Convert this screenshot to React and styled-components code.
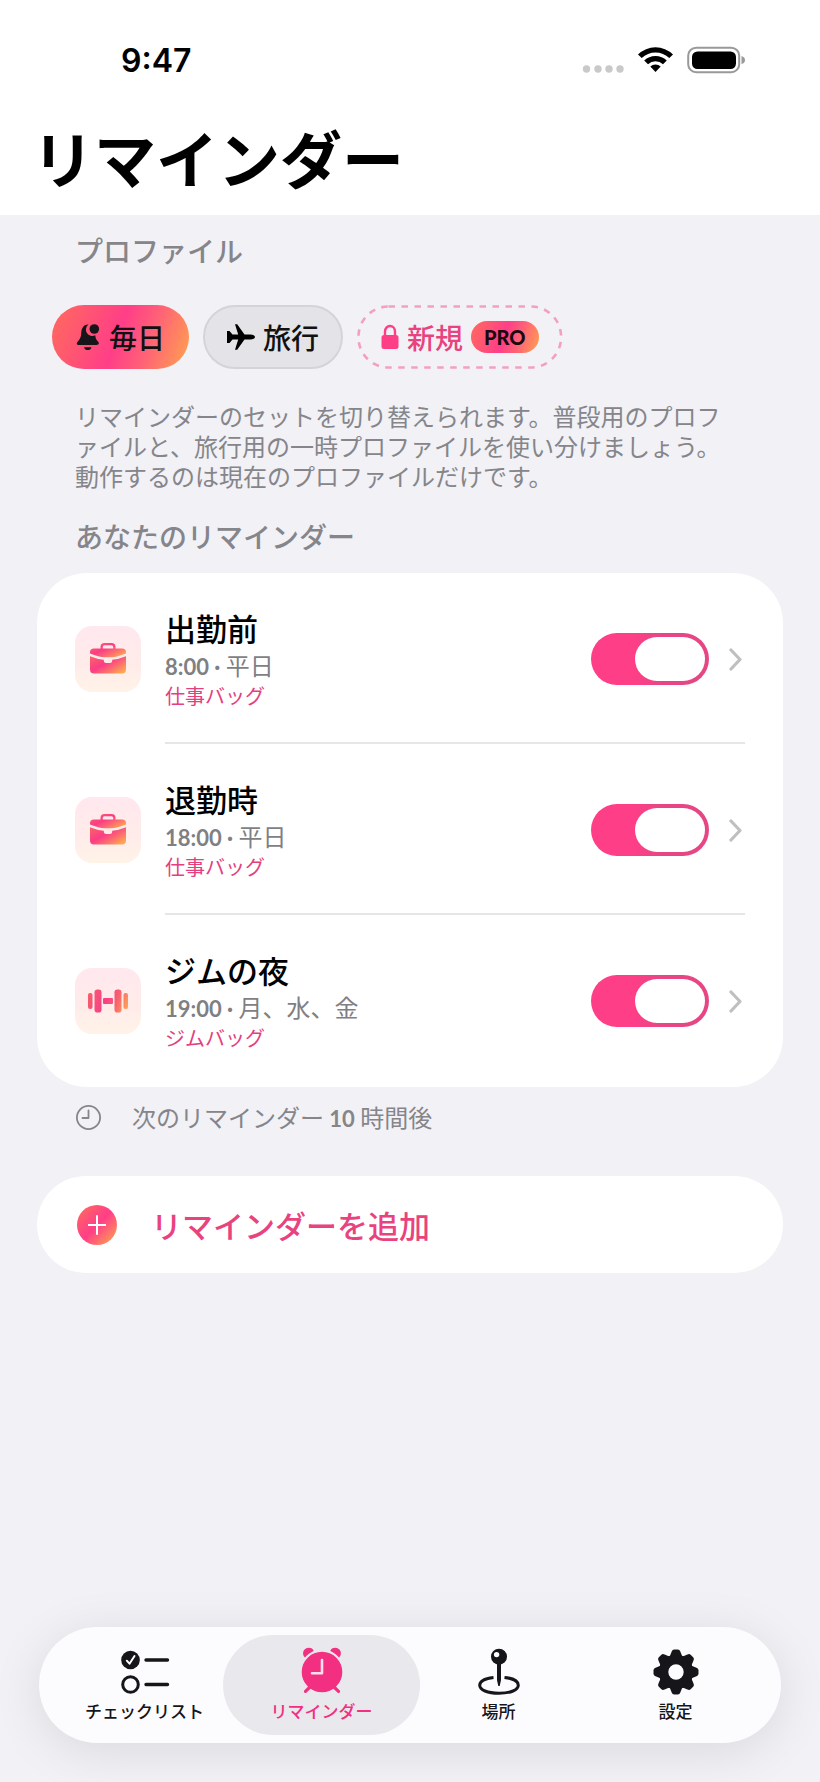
import React from 'react';
import styled, { createGlobalStyle } from 'styled-components';

const GlobalStyle = createGlobalStyle`
    * {
        box-sizing: border-box;
    }
    body {
        margin: 0;
        background: #f1f1f6;
        color: #000;
        font-family: "Noto Sans CJK JP", sans-serif;
    }
    h1, h2, h3, p, ul {
        margin: 0;
        padding: 0;
    }
    button {
        font-family: inherit;
        cursor: pointer;
    }
`;

const brandGradient = 'linear-gradient(110deg, #ff6464 8%, #ff3e88 48%, #ff5f78 68%, #ffa44e 100%)';

const StyledScreen = styled.div`
    display: flex;
    flex-direction: column;
    min-height: 100vh;
`;

const StyledHeader = styled.header`
    background: #fff;
    padding: 36px 32px 14px;
`;

const StyledStatusBar = styled.div`
    display: flex;
    align-items: center;
    justify-content: space-between;
    padding: 0 43px 0 89px;
    height: 50px;
`;

const StyledTime = styled.span`
    font-family: "Inter", sans-serif;
    font-size: 32px;
    font-weight: 600;
    line-height: 50px;
`;

const StyledTitle = styled.h1`
    margin-top: 27px;
    font-size: 62px;
    font-weight: 700;
    line-height: 88px;
`;

const StyledMain = styled.main`
    padding: 17px 37px 60px;
`;

const StyledSectionLabel = styled.h2`
    padding: 0 38px;
    color: #85858a;
    font-size: 28px;
    font-weight: 500;
    line-height: 36px;
`;

const StyledProfiles = styled.div`
    display: flex;
    flex-wrap: wrap;
    gap: 14px;
    padding: 0 15px;
    margin: 37px 0 32px;
`;

const StyledProfile = styled.button`
    display: flex;
    align-items: center;
    gap: 8px;
    height: 64px;
    padding: 0 ${props => props.$active ? 24 : 22}px;
    border: ${props => props.$active ? 'none' : '2px solid #d4d4d8'};
    border-radius: 32px;
    background: ${props => props.$active ? brandGradient : '#e4e4e8'};
    color: #111;
    font-size: 28px;
    font-weight: 500;
    line-height: 40px;
`;

const StyledNewProfile = styled(StyledProfile)`
    position: relative;
    padding: 0 24px;
    border: none;
    background: none;
    color: #e8437f;
`;

const StyledDashes = styled.svg`
    position: absolute;
    inset: 0;
    width: 100%;
    height: 100%;
`;

const StyledPro = styled.span`
    padding: 0 13px;
    border-radius: 16px;
    background: ${brandGradient};
    color: #1a0a10;
    font-family: "Lato", sans-serif;
    font-size: 20px;
    font-weight: 900;
    line-height: 32px;
`;

const StyledHint = styled.p`
    padding: 0 46px 0 38px;
    margin-bottom: 27px;
    color: #85858a;
    font-size: 24px;
    line-height: 30px;
    line-break: loose;
`;

const StyledCard = styled.ul`
    margin-top: 19px;
    padding: 0 38px;
    border-radius: 50px;
    background: #fff;
    list-style: none;
`;

const StyledReminder = styled.li`
    display: flex;
    align-items: center;
    gap: 24px;
`;

const StyledTile = styled.span`
    display: flex;
    align-items: center;
    justify-content: center;
    width: 66px;
    height: 66px;
    border-radius: 17px;
    background: linear-gradient(180deg, #ffe8ee, #ffebea 55%, #fff3e8);
`;

const StyledReminderBody = styled.div`
    display: flex;
    flex: 1;
    align-items: center;
    padding: 35px 3px ${props => props.$last ? 35 : 32}px 0;
    border-bottom: ${props => props.$last ? 'none' : '2px solid #e6e6e8'};
`;

const StyledReminderText = styled.label`
    flex: 1;
`;

const StyledReminderName = styled.h3`
    font-size: 31px;
    font-weight: 500;
    line-height: 40px;
`;

const StyledReminderTime = styled.p`
    color: #7f7f84;
    font-size: 24px;
    line-height: 34px;
`;

const StyledNumber = styled.b`
    font-family: "Lato", sans-serif;
    font-size: 22px;
    font-weight: 700;
    line-height: 1;
    white-space: pre;
`;

const StyledBag = styled.p`
    color: #e2407e;
    font-size: 20px;
    line-height: 28px;
`;

const StyledSwitch = styled.input`
    appearance: none;
    display: flex;
    justify-content: flex-end;
    width: 118px;
    height: 52px;
    margin: 0 20px 0 0;
    padding: 4px;
    border-radius: 26px;
    background: linear-gradient(90deg, #ff3e88 35%, #e64784 60%);
    &::before {
        content: "";
        width: 70px;
        height: 44px;
        border-radius: 22px;
        background: #fff;
    }
    &:not(:checked) {
        justify-content: flex-start;
        background: #d8d8dc;
    }
`;

const StyledDetails = styled.a`
    display: flex;
`;

const StyledNext = styled.p`
    display: flex;
    align-items: center;
    gap: 31px;
    margin: 15px 0 44px;
    padding: 0 38px;
    color: #85858a;
    font-size: 24px;
    line-height: 30px;
`;

const StyledAdd = styled.button`
    display: flex;
    align-items: center;
    gap: 34px;
    width: 100%;
    height: 97px;
    padding: 0 40px;
    border: none;
    border-radius: 49px;
    background: #fff;
    color: #e8437f;
    font-size: 31px;
    font-weight: 500;
    line-height: 42px;
`;

const StyledPlus = styled.span`
    display: flex;
    align-items: center;
    justify-content: center;
    width: 40px;
    height: 40px;
    border-radius: 50%;
    background: linear-gradient(135deg, #ff6464 10%, #ff3e88 50%, #ffa050 95%);
`;

const StyledTabBar = styled.nav`
    display: grid;
    grid-template-columns: repeat(4, 1fr);
    height: 116px;
    margin: auto 39px 39px;
    padding: 8px 17px;
    border-radius: 58px;
    background: #fcfcff;
    box-shadow: 0 8px 50px rgba(0, 0, 0, 0.1);
`;

const StyledTab = styled.a`
    display: flex;
    flex-direction: column;
    align-items: center;
    gap: 4px;
    margin: 0 -10px;
    padding-top: 12px;
    border-radius: 50px;
    background: ${props => props.$active ? '#e9e9ed' : 'none'};
    color: ${props => props.$active ? '#f22f80' : '#15151a'};
    font-size: 17px;
    font-weight: 500;
    line-height: 24px;
    text-decoration: none;
`;

const Gradient = ({ id }) => (
    <linearGradient id={id} x1="0" y1="0" x2="1" y2="0.8">
        <stop offset="0.05" stopColor="#fb6068" />
        <stop offset="0.45" stopColor="#fa3d86" />
        <stop offset="0.7" stopColor="#fc6a70" />
        <stop offset="1" stopColor="#ffa850" />
    </linearGradient>
);

const StatusIcons = () => (
    <svg width="164" height="30" viewBox="0 0 164 30">
        <g fill="#c9c9c9">
            <circle cx="5.500" cy="23" r="3.700" />
            <circle cx="17" cy="23" r="3.700" />
            <circle cx="28" cy="23" r="3.700" />
            <circle cx="39" cy="23" r="3.700" />
        </g>
        <path d="M57 8.500A25 25 0 0 1 92 8.500L88.300 12A20 20 0 0 0 60.700 12Z" />
        <path d="M63.200 14.500A16.200 16.200 0 0 1 85.800 14.500L82 18.300A11 11 0 0 0 67 18.300Z" />
        <path d="M69.300 20.600A7.700 7.700 0 0 1 79.700 20.600L74.500 26Z" />
        <rect x="107.200" y="1.700" width="51" height="24.500" rx="8" fill="none" stroke="#999" strokeWidth="2" />
        <rect x="111" y="5.500" width="44" height="17.500" rx="5.500" />
        <path d="M160.500 10Q164 11 164 14T160.500 18Z" fill="#999" />
    </svg>
);

const BellIcon = () => (
    <svg width="25" height="28" viewBox="0 0 25 28" fill="#18151a">
        <path d="M12 1.500C8 1.500 5.500 5 5.300 9.500C5.100 14.500 3.800 16.300 1.800 18.500C0 20.500 .8 22 2.800 22H20.500C23 22 23.600 20.300 22 18.600C20.200 16.700 19.500 15.200 19.300 12.300A6.400 6.400 0 0 1 12.500 1.500Z" />
        <circle cx="18.300" cy="6" r="4.800" />
        <path d="M8 24.200H15.500C14.800 28 8.700 28 8 24.200Z" />
    </svg>
);

const PlaneIcon = () => (
    <svg width="28" height="26" viewBox="0 0 28 26">
        <path d="M8 .3H10.200L17.500 10.500H23.500C26 10.500 28 11.800 28 13S26 15.500 23.500 15.500H17.500L10.200 25.700H8L11.200 15.500H5.500L2.500 19H0V7H2.500L5.500 10.500H11.200Z" />
    </svg>
);

const LockIcon = () => (
    <svg width="18" height="26" viewBox="0 0 18 26">
        <path d="M4 12V7.500A5 5.500 0 0 1 14 7.500V12" fill="none" stroke="#ff3e88" strokeWidth="2.400" />
        <rect x="0.500" y="11" width="17" height="14" rx="2.500" fill="#ff3e88" />
    </svg>
);

const BriefcaseIcon = ({ id }) => (
    <svg width="36" height="32" viewBox="0 0 36 32">
        <defs><Gradient id={id} /></defs>
        <g fill={`url(#${id})`}>
            <path fillRule="evenodd" d="M0 10.500V9Q0 5.500 4 5.500H10.500V4Q10.500 0 14.500 0H21.500Q25.500 0 25.500 4V5.500H32Q36 5.500 36 9V10.500Q27 14 21.500 14.200H14.500Q9 14 0 10.500ZM12.800 5.500H23.200V4Q23.200 2.200 21.500 2.200H14.500Q12.800 2.200 12.800 4Z" />
            <path d="M0 13.300Q7 16.200 13.800 16.800V17.500Q13.800 20 16.300 20H19.700Q22.200 20 22.200 17.500V16.800Q29 16.200 36 13.300V26.500Q36 30.500 32 30.500H4Q0 30.500 0 26.500Z" />
        </g>
    </svg>
);

const DumbbellIcon = ({ id }) => (
    <svg width="40" height="24" viewBox="0 0 40 24">
        <defs>
            <linearGradient id={id} gradientUnits="userSpaceOnUse" x1="0" y1="4" x2="40" y2="18">
                <stop offset="0" stopColor="#f6606b" />
                <stop offset="0.45" stopColor="#f83f88" />
                <stop offset="0.7" stopColor="#f8606f" />
                <stop offset="1" stopColor="#ffa352" />
            </linearGradient>
        </defs>
        <g fill={`url(#${id})`}>
            <rect x="0" y="4" width="4.500" height="16" rx="2" />
            <rect x="6.500" y="0.500" width="7" height="23" rx="2.800" />
            <rect x="15" y="9" width="10" height="6" rx="1" />
            <rect x="26.500" y="0.500" width="7" height="23" rx="2.800" />
            <rect x="35.500" y="4" width="4.500" height="16" rx="2" />
        </g>
    </svg>
);

const ChevronIcon = () => (
    <svg width="13" height="23" viewBox="0 0 13 23">
        <path d="M2 2L11 11.500L2 21" fill="none" stroke="#bfbfc2" strokeWidth="3.200" strokeLinecap="round" strokeLinejoin="round" />
    </svg>
);

const ClockIcon = () => (
    <svg width="26" height="26" viewBox="0 0 26 26" fill="none" stroke="#85858a" strokeWidth="1.800">
        <circle cx="13.500" cy="13.500" r="11.600" />
        <path d="M13.500 6.500V14H7.500" strokeLinecap="round" strokeLinejoin="round" />
    </svg>
);

const PlusIcon = () => (
    <svg width="18" height="20" viewBox="0 0 18 20">
        <path d="M9 1V19M0.500 10H17.500" stroke="#fff" strokeWidth="2" strokeLinecap="round" />
    </svg>
);

const ChecklistIcon = () => (
    <svg width="50" height="48" viewBox="0 0 50 48" fill="none">
        <circle cx="10.500" cy="13" r="9.300" fill="#15151a" />
        <path d="M6.800 13.700L9.500 16.700L14.500 9" stroke="#fff" strokeWidth="2" strokeLinecap="round" strokeLinejoin="round" />
        <circle cx="10.500" cy="37.500" r="7.800" stroke="#15151a" strokeWidth="3" />
        <path d="M26 13H47.500M26 37.500H47.500" stroke="#15151a" strokeWidth="3.400" strokeLinecap="round" />
    </svg>
);

const AlarmIcon = () => (
    <svg width="44" height="48" viewBox="0 0 44 48">
        <g fill="#f22f80">
            <circle cx="22" cy="25" r="20.300" />
            <path d="M5 10.500C1.500 7.500 2.800 1 9 .8C11.300 .8 13 2 13.700 4C10.500 5.300 7.300 7.600 5 10.500Z" />
            <path d="M39 10.500C42.500 7.500 41.200 1 35 .8C32.700 .8 31 2 30.300 4C33.500 5.300 36.700 7.600 39 10.500Z" />
        </g>
        <path d="M9.500 40.500L5.500 44.300M34.500 40.500L38.500 44.300" stroke="#f22f80" strokeWidth="3.200" strokeLinecap="round" />
        <path d="M22 13V26.300H12" fill="none" stroke="#fff" strokeOpacity="0.85" strokeWidth="2.600" strokeLinecap="round" strokeLinejoin="round" />
    </svg>
);

const PinIcon = () => (
    <svg width="44" height="48" viewBox="0 0 44 48">
        <circle cx="22" cy="9.700" r="8" fill="#15151a" />
        <circle cx="19.600" cy="7.600" r="2.700" fill="#fff" />
        <path d="M20 17H24V33L22.700 39H21.300L20 33Z" fill="#15151a" />
        <path d="M16.500 30.400C8 31.300 2.700 34.400 2.700 38.300C2.700 43 10.500 46.200 22 46.200S41.300 43 41.300 38.300C41.300 34.400 36 31.300 27.500 30.400" fill="none" stroke="#15151a" strokeWidth="3" />
    </svg>
);

const GearIcon = () => (
    <svg width="46" height="48" viewBox="-23 -25 46 48" fill="#15151a">
        <circle r="12.500" fill="none" stroke="#15151a" strokeWidth="9.600" />
        {[0, 45, 90, 135, 180, 225, 270, 315].map(angle => (
            <path key={angle} transform={`rotate(${angle})`} d="M-6.500 -15L-4.300 -20.500Q-3.700 -22.500 -1.800 -22.500H1.800Q3.700 -22.500 4.300 -20.500L6.500 -15Z" />
        ))}
    </svg>
);

const reminders = [
    { id: 'leave', name: '出勤前', time: '8:00', days: '平日', bag: '仕事バッグ', Icon: BriefcaseIcon },
    { id: 'return', name: '退勤時', time: '18:00', days: '平日', bag: '仕事バッグ', Icon: BriefcaseIcon },
    { id: 'gym', name: 'ジムの夜', time: '19:00', days: '月、水、金', bag: 'ジムバッグ', Icon: DumbbellIcon },
];

const tabs = [
    { label: 'チェックリスト', Icon: ChecklistIcon },
    { label: 'リマインダー', Icon: AlarmIcon, active: true },
    { label: '場所', Icon: PinIcon },
    { label: '設定', Icon: GearIcon },
];

const Reminder = ({ reminder, last }) => {
    const { id, name, time, days, bag, Icon } = reminder;
    return (
        <StyledReminder>
            <StyledTile><Icon id={`icon-${id}`} /></StyledTile>
            <StyledReminderBody $last={last}>
                <StyledReminderText htmlFor={id}>
                    <StyledReminderName>{name}</StyledReminderName>
                    <StyledReminderTime><StyledNumber>{`${time} · `}</StyledNumber>{days}</StyledReminderTime>
                    <StyledBag>{bag}</StyledBag>
                </StyledReminderText>
                <StyledSwitch id={id} type="checkbox" role="switch" defaultChecked />
                <StyledDetails href={`#${id}`} aria-label={name}><ChevronIcon /></StyledDetails>
            </StyledReminderBody>
        </StyledReminder>
    );
};

const App = () => (
    <StyledScreen lang="ja">
        <GlobalStyle />
        <StyledHeader>
            <StyledStatusBar>
                <StyledTime>9:47</StyledTime>
                <StatusIcons />
            </StyledStatusBar>
            <StyledTitle>リマインダー</StyledTitle>
        </StyledHeader>
        <StyledMain>
            <StyledSectionLabel>プロファイル</StyledSectionLabel>
            <StyledProfiles>
                <StyledProfile $active><BellIcon />毎日</StyledProfile>
                <StyledProfile><PlaneIcon />旅行</StyledProfile>
                <StyledNewProfile>
                    <StyledDashes>
                        <rect x="1.500" y="1.500" rx="30" fill="none" stroke="#f3a0c0" strokeWidth="2.600" strokeDasharray="6.500 6.500" style={{ width: 'calc(100% - 3px)', height: 'calc(100% - 3px)' }} />
                    </StyledDashes>
                    <LockIcon />新規<StyledPro>PRO</StyledPro>
                </StyledNewProfile>
            </StyledProfiles>
            <StyledHint>
                リマインダーのセットを切り替えられます。普段用のプロファイルと、旅行用の一時プロファイルを使い分けましょう。動作するのは現在のプロファイルだけです。
            </StyledHint>
            <StyledSectionLabel>あなたのリマインダー</StyledSectionLabel>
            <StyledCard>
                {reminders.map((reminder, i) => (
                    <Reminder key={reminder.id} reminder={reminder} last={i === reminders.length - 1} />
                ))}
            </StyledCard>
            <StyledNext>
                <ClockIcon />
                <span>次のリマインダー<StyledNumber> 10 </StyledNumber>時間後</span>
            </StyledNext>
            <StyledAdd><StyledPlus><PlusIcon /></StyledPlus>リマインダーを追加</StyledAdd>
        </StyledMain>
        <StyledTabBar>
            {tabs.map(({ label, Icon, active }) => (
                <StyledTab key={label} href="#" $active={active}><Icon />{label}</StyledTab>
            ))}
        </StyledTabBar>
    </StyledScreen>
);

export default App;
